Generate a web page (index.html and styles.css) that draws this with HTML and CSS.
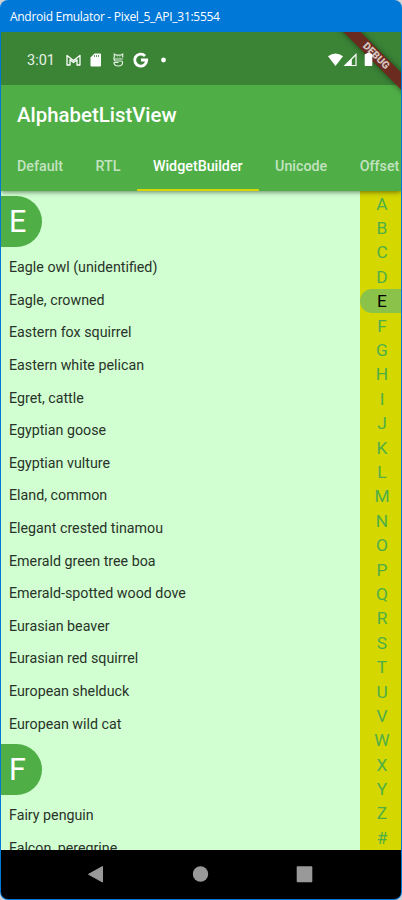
FILE: index.html
```
<!DOCTYPE html>
<html lang="en">
<head>
<meta charset="utf-8">
<title>AlphabetListView</title>
<link rel="stylesheet" href="styles.css">
</head>
<body>
<div class="window">
  <header class="titlebar"><span>Android Emulator - Pixel_5_API_31:5554</span></header>
  <div class="screen">
    <div class="statusbar">
      <span class="clock">3:01</span>
      <svg class="status-left" width="106" height="20" viewBox="0 0 106 20">
        <path d="M2 15V5.500l6.500 5 6.500-5V15h-3V9.800L8.500 12.500 5 9.800V15z" fill="none" stroke="#fff" stroke-width="1.300" stroke-linejoin="round"/>
        <path d="M29.500 3.500h5.500q1 0 1 1v11q0 1-1 1h-8.500q-1 0-1-1V7.500z" fill="#fff"/>
        <path d="M29.500 5v2M31.500 5v2M33.500 5v2" stroke="#3b8436" stroke-width=".8"/>
        <path d="M49.300 7.500V4l2 1.200h4.400l2-1.200v3.500M57.800 9h-7.500q-1.300 0-1.300 0V7.500M49 9q0 2 1.500 2h5.500q1.600 0 1.600 1.500 0 3.500-4.300 3.500t-4.300-3.500h4.500" fill="none" stroke="#e3f1e2" stroke-width="1.200"/>
        <path d="M51.800 7h.8M54.500 7h.8" stroke="#e3f1e2"/>
        <path d="M80 5.900A6 6 0 1 0 81.700 10H76" fill="none" stroke="#fff" stroke-width="2.900"/>
        <circle cx="98.500" cy="10" r="2.400" fill="#fff"/>
      </svg>
      <svg class="status-right" width="48" height="20" viewBox="0 0 48 20">
        <path d="M1 6.200Q8.500 .8 16 6.200L8.500 16z" fill="#fff"/>
        <path d="M29 4.500v11H18z" fill="none" stroke="#fff" stroke-width="1.200"/>
        <path d="M24.800 8.800v6.700h-6.500z" fill="#fff"/>
        <path d="M38.500 4h1V3h4v1h1q.8 0 .8.800v10.400q0 .8-.8.800h-6q-.8 0-.8-.8V4.800q0-.8.800-.8z" fill="#fff"/>
      </svg>
    </div>
    <div class="appbar">
      <h1>AlphabetListView</h1>
      <nav class="tabs">
        <span class="tab">Default</span><span class="tab">RTL</span><span class="tab active">WidgetBuilder</span><span class="tab">Unicode</span><span class="tab">Offset</span>
      </nav>
    </div>
    <main class="content">
      <div class="list">
        <div class="heading"><span class="badge">E</span></div>
        <div class="row">Eagle owl (unidentified)</div>
        <div class="row">Eagle, crowned</div>
        <div class="row">Eastern fox squirrel</div>
        <div class="row">Eastern white pelican</div>
        <div class="row">Egret, cattle</div>
        <div class="row">Egyptian goose</div>
        <div class="row">Egyptian vulture</div>
        <div class="row">Eland, common</div>
        <div class="row">Elegant crested tinamou</div>
        <div class="row">Emerald green tree boa</div>
        <div class="row">Emerald-spotted wood dove</div>
        <div class="row">Eurasian beaver</div>
        <div class="row">Eurasian red squirrel</div>
        <div class="row">European shelduck</div>
        <div class="row">European wild cat</div>
        <div class="heading"><span class="badge">F</span></div>
        <div class="row">Fairy penguin</div>
        <div class="row">Falcon, peregrine</div>
      </div>
      <div class="index">
        <span>A</span><span>B</span><span>C</span><span>D</span><span class="current">E</span><span>F</span><span>G</span><span>H</span><span>I</span><span>J</span><span>K</span><span>L</span><span>M</span><span>N</span><span>O</span><span>P</span><span>Q</span><span>R</span><span>S</span><span>T</span><span>U</span><span>V</span><span>W</span><span>X</span><span>Y</span><span>Z</span><span>#</span>
      </div>
    </main>
    <div class="ribbon"><span>DEBUG</span></div>
    <footer class="navbar">
      <svg width="400" height="49" viewBox="0 0 400 49">
        <path d="M101.500 16.500v15.500L87.500 24.300z" fill="#999" stroke="#999" stroke-linejoin="round"/>
        <circle cx="199.500" cy="24" r="7.700" fill="#999"/>
        <rect x="295.700" y="16.200" width="15.600" height="16" rx="1" fill="#999"/>
      </svg>
    </footer>
  </div>
</div>
</body>
</html>
```
FILE: styles.css
```
* { box-sizing: border-box; }
body { margin: 0; background: #d2d2d2; font-family: Roboto, sans-serif; }
.window {
  width: 402px; height: 900px; padding: 0 1px 1px;
  background: #0078d7; border-radius: 8px; overflow: hidden;
}
.titlebar {
  height: 32px; padding: 2px 0 0 9px; display: flex; align-items: center;
  color: #fff; font: 12px/16px "Open Sans", sans-serif; letter-spacing: -0.290px; white-space: pre;
}
.screen { position: relative; height: 867px; display: flex; flex-direction: column; overflow: hidden; border-radius: 0 0 7px 7px; }
.statusbar { height: 53px; flex: none; background: #3b8436; display: flex; align-items: center; padding: 3px 26.500px 0 26px; color: #fff; }
.clock { width: 38px; padding-top: 1px; font-size: 14.500px; color: #e6f2e5; }
.status-right { position: relative; z-index: 4; margin-left: auto; }
.appbar { height: 106px; flex: none; background: #4faf46; position: relative; z-index: 1; box-shadow: 0 1px 5px rgba(0,0,0,.5); clip-path: inset(0 0 -10px 0); }
h1 { margin: 0; height: 56px; padding: 2px 0 0 16px; line-height: 56px; font-size: 20.400px; font-weight: 500; color: #fff; }
.tabs { display: flex; height: 50px; overflow: hidden; white-space: nowrap; }
.tab { flex: none; padding: 0 16.500px 0 16px; line-height: 50px; font-size: 14.270px; font-weight: 500; color: #c3e3c0; }
.tab.active { color: #fff; border-bottom: 2px solid #d4d700; }
.content { height: 659px; flex: none; display: flex; background: #d1ffd1; overflow: hidden; }
.list { width: 359px; padding-top: .7px; }
.heading { height: 59px; padding: 4px 0; }
.badge { display: block; width: 41px; height: 51px; padding-left: 8px; border-radius: 0 25.500px 25.500px 0; background: #4faf46; color: #fff; font-size: 30.500px; line-height: 51px; }
.row { height: 32.600px; padding: .5px 0 0 8px; line-height: 32.600px; font-size: 14.250px; color: #293329; white-space: nowrap; }
.index { width: 41px; background: #d4d700; display: grid; grid-template-rows: repeat(27, 24.400px); }
.index span { padding: .7px 0 0 3px; text-align: center; line-height: 24.400px; font-size: 17.300px; color: #4faf46; }
.index .current { background: #8bc34a; color: #000; border-radius: 12.200px 0 0 12.200px; }
.ribbon { position: absolute; z-index: 3; top: 0; right: 0; width: 66px; height: 66px; overflow: hidden; }
.ribbon span {
  position: absolute; left: -14.500px; top: 17.800px; width: 110px; height: 12px;
  transform: rotate(45deg); background: #6b2b1e; box-shadow: 0 0 6px rgba(0,0,0,.5);
  color: #d4c4c0; font-size: 10.300px; font-weight: 900; line-height: 12px; text-align: center;
}
.navbar { height: 49px; flex: none; background: #000; }
.navbar svg { display: block; }
```
